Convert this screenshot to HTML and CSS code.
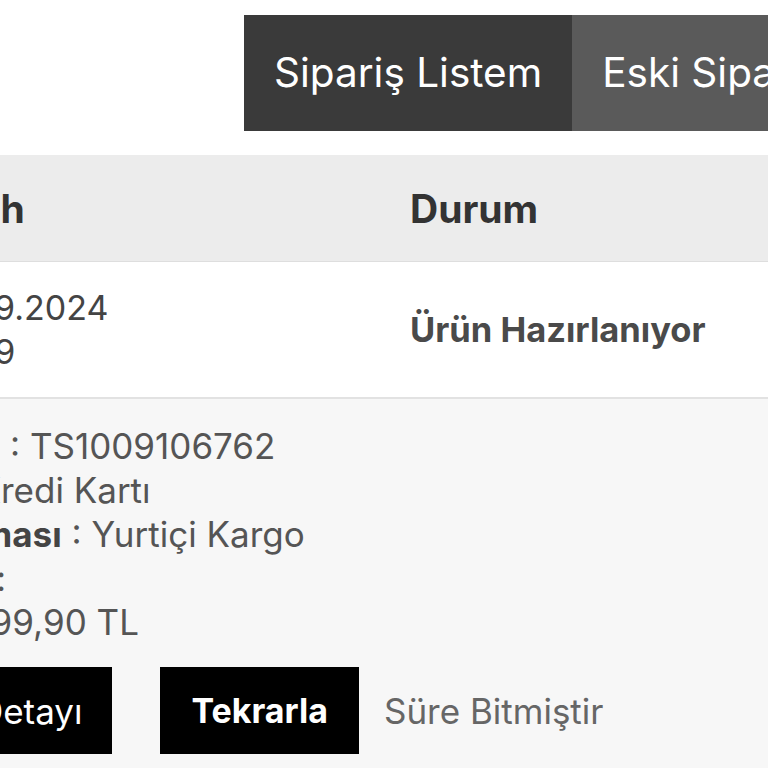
FILE: index.html
```html
<!DOCTYPE html>
<html lang="tr">
  <head>
    <meta charset="UTF-8" />
    <meta name="viewport" content="width=device-width, initial-scale=1.0" />
    <title>Siparişlerim</title>
    <link rel="stylesheet" href="styles.css">
  </head>
  <body>
    <div class="page">
      <div class="tabs">
        <div class="tab active">Sipariş Listem</div>
        <div class="tab">Eski Siparişlerim</div>
      </div>

      <div class="orders">
        <div class="orders-head">
          <div class="col-date">Tarih</div>
          <div class="col-status">Durum</div>
        </div>

        <div class="order-row">
          <div class="col-date">
            27.09.2024<br>
            14:29
          </div>
          <div class="col-status status">Ürün Hazırlanıyor</div>
        </div>

        <div class="order-detail">
          <div class="detail-line"><b>Sipariş No</b> : TS1009106762</div>
          <div class="detail-line"><b>Ödeme</b> : Kredi Kartı</div>
          <div class="detail-line"><b>Kargo Firması</b> : Yurtiçi Kargo</div>
          <div class="detail-line"><b>Takip No.</b> :</div>
          <div class="detail-line"><b>Tutar</b> : 1.299,90 TL</div>

          <div class="detail-actions">
            <button class="btn-dark">Sipariş Detayı</button>
            <button class="btn-dark bold">Tekrarla</button>
            <span class="expired">Süre Bitmiştir</span>
          </div>
        </div>
      </div>
    </div>
  </body>
</html>
```

FILE: styles.css
```css
* {
  margin: 0;
  padding: 0;
  box-sizing: border-box;
  font-family: Inter, 'Noto Sans', sans-serif;
}

body {
  background-color: white;
  overflow: hidden;
}

.page {
  width: 1300px;
  margin-left: -180px;
}

.tabs {
  display: flex;
  padding-left: 424px;
  margin-top: 15px;
}

.tab {
  height: 116px;
  line-height: 116px;
  padding: 0 30px;
  font-size: 40.5px;
  color: white;
  background-color: #5a5a5a;
  white-space: nowrap;
}

.tab.active {
  background-color: #3a3a3a;
}

.orders {
  margin-top: 24px;
}

.orders-head,
.order-row {
  display: grid;
  grid-template-columns: 590px 1fr;
  align-items: center;
}

.orders-head {
  height: 107px;
  background-color: #ececec;
  border-bottom: 1px solid #dedede;
  font-size: 39px;
  font-weight: 700;
  color: #333;
}

.col-date {
  padding-left: 108px;
}

.order-row {
  height: 137px;
  background-color: white;
  border-bottom: 2px solid #e2e2e2;
  font-size: 34px;
  line-height: 44px;
  color: #444;
}

.status {
  font-weight: 700;
  font-size: 34.5px;
  color: #4a4a4a;
}

.order-detail {
  background-color: #f7f7f7;
  padding: 25px 5px 40px;
  font-size: 35px;
  line-height: 44px;
  color: #555;
}

.detail-line b {
  color: #444;
}

.detail-actions {
  display: flex;
  align-items: center;
  margin-top: 23px;
}

.btn-dark {
  height: 87px;
  padding: 0 30px;
  background-color: black;
  color: white;
  border: none;
  font-size: 35px;
  margin-right: 48px;
  cursor: pointer;
}

.btn-dark.bold {
  padding: 0 31px;
  font-size: 34px;
  font-weight: 700;
  margin-right: 25px;
}

.expired {
  color: #666;
}
```
